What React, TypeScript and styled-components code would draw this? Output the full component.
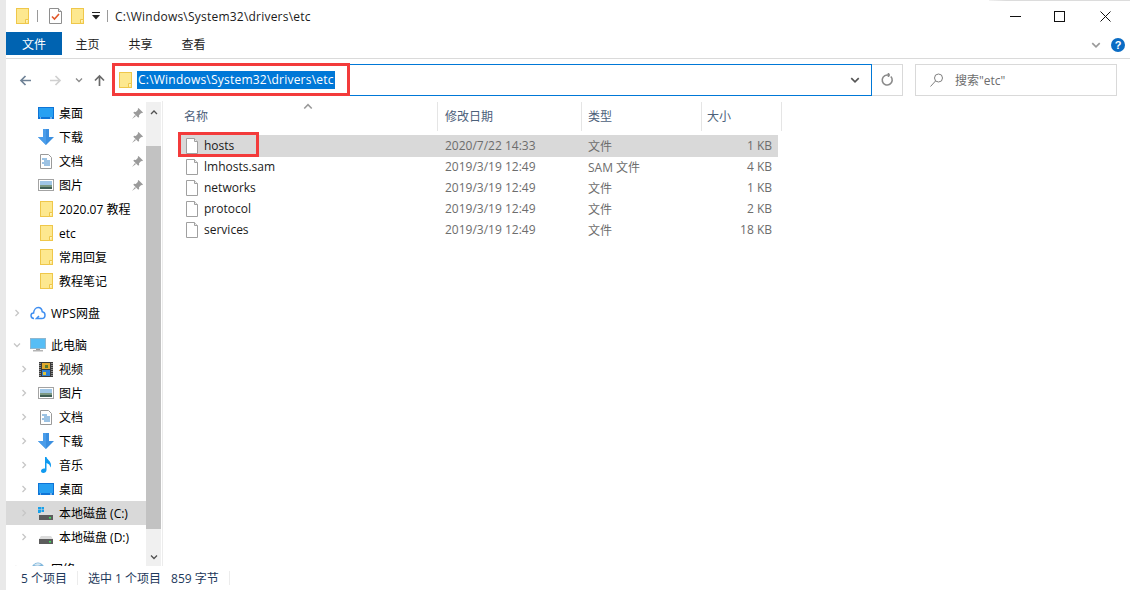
import React, { ReactElement, ReactNode } from "react";
import styled, { createGlobalStyle } from "styled-components";

const GlobalStyle = createGlobalStyle`
  html, body {
    margin: 0;
    padding: 0;
    background: #fff;
  }
  body {
    font-family: "Open Sans", "Noto Sans CJK SC", sans-serif;
    font-size: 12px;
    color: #000;
  }
  * {
    box-sizing: border-box;
  }
`;

const Window = styled.div`
  width: 1130px;
  height: 590px;
  display: flex;
  flex-direction: column;
  padding-left: 6px;
  background: #e9e9e9;
  overflow: hidden;
`;
const Inner = styled.div`
  flex: 1;
  display: flex;
  flex-direction: column;
  min-height: 0;
  background: #fff;
`;

/* title bar */
const TitleBar = styled.div`
  position: relative;
  height: 32px;
  flex: none;
  display: flex;
  align-items: center;
  padding-left: 10px;
  &::after {
    content: "";
    position: absolute;
    top: 0;
    right: 0;
    width: 141px;
    height: 1px;
    background: linear-gradient(90deg, #f2f2f2, #dcdcdc 12%);
  }
`;
const TitleSep = styled.span<{ $l: number; $r: number }>`
  width: 1px;
  height: 12px;
  margin: 0 ${p => p.$r}px 0 ${p => p.$l}px;
  background: #9a9a9a;
`;
const TitleText = styled.span`
  color: #1a1a1a;
  letter-spacing: 0.22px;
  white-space: nowrap;
`;
const QuickIcons = styled.div`
  display: flex;
  align-items: center;
  gap: 8px;
`;
const WindowButtons = styled.div`
  margin-left: auto;
  display: flex;
  align-items: center;
  padding-right: 2px;
`;
const WindowButton = styled.button`
  width: 46px;
  height: 32px;
  border: 0;
  padding: 0;
  background: none;
  display: flex;
  align-items: center;
  justify-content: center;
  &:first-child {
    width: 42px;
  }
`;

/* ribbon */
const Ribbon = styled.div`
  height: 27px;
  flex: none;
  display: flex;
  align-items: flex-start;
  border-bottom: 1px solid #dadada;
`;
const FileTab = styled.div`
  width: 56px;
  height: 23px;
  margin-right: -1px;
  background: #0063b1;
  color: #fff;
  display: flex;
  align-items: center;
  justify-content: center;
`;
const Tab = styled.div`
  width: 53px;
  height: 23px;
  color: #222;
  display: flex;
  align-items: center;
  justify-content: center;
`;
const RibbonRight = styled.div`
  margin-left: auto;
  height: 26px;
  display: flex;
  align-items: center;
  gap: 10px;
  padding-right: 5px;
`;
const HelpBadge = styled.span`
  width: 14px;
  height: 14px;
  border-radius: 50%;
  background: #0a6cc4;
  color: #fff;
  font: bold 11px/14px "Liberation Sans", sans-serif;
  text-align: center;
`;

/* address row */
const AddressRow = styled.div`
  height: 42px;
  flex: none;
  display: flex;
  align-items: flex-start;
  padding-top: 5px;
`;
const NavButtons = styled.div`
  width: 106px;
  height: 32px;
  flex: none;
  display: flex;
  align-items: center;
  padding-left: 13px;
`;
const NavButton = styled.span<{ $l: number }>`
  margin-left: ${p => p.$l}px;
  display: flex;
`;
const AddressBox = styled.div`
  position: relative;
  width: 760px;
  height: 32px;
  flex: none;
  display: flex;
  align-items: center;
  padding: 0 11px 0 6px;
  border: 1px solid #0078d7;
`;
const SelectedPath = styled.span`
  margin-left: 5px;
  height: 18px;
  line-height: 17px;
  padding: 0 1px;
  background: #0078d7;
  color: #fff;
  letter-spacing: 0.22px;
  white-space: nowrap;
`;
const AddressChevron = styled.span`
  margin-left: auto;
  display: flex;
`;
const RefreshBox = styled.div`
  width: 32px;
  height: 32px;
  flex: none;
  margin-left: -1px;
  border: 1px solid #d9d9d9;
  display: flex;
  align-items: center;
  justify-content: center;
`;
const SearchBox = styled.div`
  width: 202px;
  height: 32px;
  flex: none;
  margin-left: 12px;
  border: 1px solid #d9d9d9;
  display: flex;
  align-items: center;
  padding-left: 14px;
  gap: 11px;
  color: #6d6d6d;
`;
const RedMark = styled.div<{ $l: number; $t: number; $w: number; $h: number }>`
  position: absolute;
  left: ${p => p.$l}px;
  top: ${p => p.$t}px;
  width: ${p => p.$w}px;
  height: ${p => p.$h}px;
  border: 3px solid #f33b3b;
  pointer-events: none;
`;

/* body */
const Body = styled.div`
  flex: 1;
  min-height: 0;
  display: flex;
`;
const NavPane = styled.div`
  width: 140px;
  flex: none;
  overflow: hidden;
  display: flex;
  flex-direction: column;
`;
const NavGroup = styled.div`
  flex: none;
  display: flex;
  flex-direction: column;
  margin-bottom: 8px;
`;
const NavRow = styled.div<{ $depth: number; $selected?: boolean }>`
  height: 24px;
  flex: none;
  display: flex;
  align-items: center;
  padding-left: ${p => (p.$depth === 0 ? 4 : 11)}px;
  background: ${p => (p.$selected ? "#d9d9d9" : "transparent")};
  white-space: nowrap;
`;
const Expander = styled.span`
  width: 14px;
  height: 16px;
  flex: none;
  display: flex;
  align-items: center;
  justify-content: center;
`;
const NavIcon = styled.span<{ $depth: number }>`
  width: ${p => (p.$depth === 0 ? 17 : 18)}px;
  height: 16px;
  flex: none;
  margin: 0 ${p => (p.$depth === 0 ? 5 : 4)}px 0 ${p => (p.$depth === 0 ? 5 : 6)}px;
  display: flex;
  align-items: center;
  justify-content: center;
`;
const PinSlot = styled.span`
  margin-left: auto;
  margin-right: 3px;
  display: flex;
`;
const ScrollBar = styled.div`
  width: 15px;
  flex: none;
  display: flex;
  flex-direction: column;
  margin-top: 1px;
  background: #f0f0f0;
`;
const ScrollArrow = styled.div<{ $h: number }>`
  height: ${p => p.$h}px;
  flex: none;
  display: flex;
  justify-content: center;
  padding-top: 6px;
`;
const ScrollThumb = styled.div`
  height: 383px;
  flex: none;
  background: #c2c2c2;
`;
const ScrollTail = styled.div`
  flex: 1;
  display: flex;
  justify-content: center;
  align-items: flex-end;
  padding-bottom: 5px;
`;
const PaneLine = styled.div`
  width: 1px;
  flex: none;
  margin-left: 1px;
  background: #ececec;
`;

/* file list */
const ListPane = styled.div`
  position: relative;
  flex: 1;
  display: flex;
  flex-direction: column;
`;
const HeaderRow = styled.div`
  height: 29px;
  flex: none;
  margin-top: 1px;
  display: grid;
  grid-template-columns: 275px 144px 120px 80px;
  width: 619px;
  color: #4c607a;
`;
const HeaderCell = styled.div<{ $pad: number }>`
  border-right: 1px solid #e5e5e5;
  padding: 0 0 2px ${p => p.$pad}px;
  display: flex;
  align-items: center;
`;
const SortMark = styled.span`
  position: absolute;
  left: 140px;
  top: 0;
  display: flex;
`;
const FileList = styled.div`
  margin: 4px 0 0 16px;
  width: 599px;
  display: flex;
  flex-direction: column;
`;
const FileRow = styled.div<{ $selected?: boolean }>`
  height: 21px;
  flex: none;
  display: grid;
  grid-template-columns: 259px 144px 120px 76px;
  align-items: center;
  background: ${p => (p.$selected ? "#d9d9d9" : "transparent")};
  box-shadow: ${p => (p.$selected ? "0 1px 0 #d9d9d9" : "none")};
`;
const NameCell = styled.div`
  display: flex;
  align-items: center;
  padding-left: 7px;
  gap: 6px;
  color: #1a1a1a;
`;
const InfoCell = styled.div<{ $pad: number; $right?: boolean }>`
  color: #6d6d6d;
  padding: 0 ${p => (p.$right ? 6 : 0)}px 0 ${p => p.$pad}px;
  text-align: ${p => (p.$right ? "right" : "left")};
  white-space: nowrap;
`;

/* status bar */
const StatusBar = styled.div`
  height: 24px;
  flex: none;
  display: flex;
  align-items: center;
  padding-left: 15px;
  color: #1e395b;
  background: #fff;
`;
const StatusSep = styled.span`
  width: 1px;
  height: 14px;
  margin: 0 10px;
  background: #ececec;
`;
const StatusGap = styled.span`
  width: 10px;
`;

/* icons */
const FolderIcon = (): ReactElement => (
  <svg width="13" height="16" viewBox="0 0 13 16">
    <rect x="0.5" y="0.5" width="12" height="15" fill="#fde88f" stroke="#efc74a" />
    <path d="M9.500 15.500v-4h3" fill="#fff3bf" stroke="#efc74a" />
  </svg>
);
const ChecklistIcon = (): ReactElement => (
  <svg width="14" height="16" viewBox="0 0 14 16">
    <path d="M.5.5h9l3 3v12H.5z" fill="#fff" stroke="#8e8e8e" />
    <path d="M9.500.5v3h3" fill="#e4e4e4" stroke="#8e8e8e" />
    <path d="M3 8.500l2.500 2.500 4.500-5" fill="none" stroke="#e2582a" strokeWidth="1.600" />
  </svg>
);
const DropLine = (): ReactElement => (
  <svg width="8" height="8" viewBox="0 0 8 8">
    <rect x="0" y="0" width="8" height="1" fill="#222" />
    <path d="M0 3h8L4 7.500z" fill="#222" />
  </svg>
);
const DesktopIcon = (): ReactElement => (
  <svg width="16" height="12" viewBox="0 0 16 12">
    <rect width="16" height="12" fill="#0f74d6" />
    <rect x="1" y="1" width="14" height="9" fill="#27a0f2" />
    <rect x="12" y="10.500" width="2" height="1" fill="#cfe8fb" />
    <rect x="2" y="10.500" width="1" height="1" fill="#cfe8fb" />
  </svg>
);
const DownloadIcon = (): ReactElement => (
  <svg width="16" height="16" viewBox="0 0 16 16">
    <path d="M5 0h6v8h5l-8 8-8-8h5z" fill="#3b8fe0" />
    <path d="M5 0h3v16L0 8h5z" fill="#4a9dea" />
  </svg>
);
const DocIcon = (): ReactElement => (
  <svg width="12" height="15" viewBox="0 0 12 15">
    <path d="M.5.5h8l3 3v11H.5z" fill="#fff" stroke="#9a9a9a" />
    <path d="M2 5h5M4 7h6M2 9h8M4 11h6" stroke="#3a86c8" />
  </svg>
);
const PictureIcon = (): ReactElement => (
  <svg width="16" height="12" viewBox="0 0 16 12">
    <rect x="0.5" y="0.5" width="15" height="11" fill="#fff" stroke="#a3a3a3" />
    <rect x="2" y="2" width="12" height="4" fill="#9fc6e6" />
    <rect x="2" y="6" width="12" height="2" fill="#7d9a84" />
    <rect x="2" y="8" width="12" height="2" fill="#3f5f55" />
  </svg>
);
const CloudIcon = (): ReactElement => (
  <svg width="16" height="14" viewBox="0 0 16 14">
    <path
      d="M4 12.500C2 12.500 1 11 1 9.600 1 8 2.300 7 3.600 7c.2-3 2.200-5.500 4.600-5.500 2.400 0 3.800 2 4 4.200 1.600.2 2.800 1.600 2.800 3.200 0 2-1.400 3.600-3.400 3.600H6.500L9 10"
      fill="none"
      stroke="#3f8ef0"
      strokeWidth="1.500"
    />
  </svg>
);
const PcIcon = (): ReactElement => (
  <svg width="16" height="14" viewBox="0 0 16 14">
    <rect x="0.5" y="0.5" width="15" height="10" fill="#56bdf5" stroke="#8fb7cf" />
    <rect x="6" y="11" width="4" height="1" fill="#9a9a9a" />
    <rect x="3" y="12" width="10" height="1.500" fill="#b5b5b5" />
  </svg>
);
const FilmIcon = (): ReactElement => (
  <svg width="14" height="15" viewBox="0 0 14 15">
    <rect width="14" height="15" fill="#3a3a3a" />
    <rect x="3" y="1" width="8" height="6" fill="#e0a92e" />
    <rect x="3" y="8" width="8" height="6" fill="#2f7fd0" />
    <rect x="6" y="3" width="3" height="3" fill="#5a7b2e" />
    <rect x="4" y="10" width="3" height="3" fill="#e0c23a" />
    <path d="M1 1v13M13 1v13" stroke="#ddd" strokeDasharray="1 1" />
  </svg>
);
const MusicIcon = (): ReactElement => (
  <svg width="12" height="16" viewBox="0 0 12 16">
    <path
      d="M5 0h1.500c.3 2.500 4.500 4 4.500 8 0 1-.3 2-.8 2.600.3-2.400-1.700-4-3.700-4.600V13c0 1.700-1.500 3-3.300 3C2 16 1 15.200 1 14c0-1.500 1.500-2.600 3-2.600.4 0 .7 0 1 .1z"
      fill="#0f9af0"
    />
  </svg>
);
const DiskIcon = ({ system }: { system?: boolean }): ReactElement => (
  <svg width="16" height="16" viewBox="0 0 16 16">
    {system && (
      <path d="M0 2h3v2.500H0zM3.500 2H6v2.500H3.500zM0 5h3v3H0zM3.500 5H6v3H3.500z" fill="#18a0ea" />
    )}
    <path d="M3 7h10l2 3H1z" fill="#dcdcdc" />
    <rect x="1" y="10" width="14" height="5" fill="#5c5c5c" />
    <rect x="11" y="12" width="2" height="1.500" fill="#3fe05a" />
  </svg>
);
const GlobeIcon = (): ReactElement => (
  <svg width="14" height="16" viewBox="0 0 14 16">
    <circle cx="7" cy="8" r="6.500" fill="#7fb6dc" />
    <path d="M3 4c2-2 5-2 7-1-1 2-4 2-7 1z" fill="#d8e8f2" />
  </svg>
);
const PinIcon = (): ReactElement => (
  <svg width="11" height="11" viewBox="0 0 11 11">
    <path
      d="M6.500 0L11 4.500l-1 .8-.8-.3L7 7.200l.2 1.600-.9.900L1.300 4.700l.9-.9 1.600.2L6 1.800 5.700 1z"
      fill="#9b9b9b"
    />
    <path d="M3 7L0 11l4-3z" fill="#9b9b9b" />
  </svg>
);
const FileIcon = (): ReactElement => (
  <svg width="12" height="16" viewBox="0 0 12 16">
    <path d="M.5.5h8l3 3v12H.5z" fill="#fff" stroke="#a0a0a0" />
    <path d="M8.500.5v3h3" fill="#ededed" stroke="#a0a0a0" />
  </svg>
);
const Chevron = ({
  dir,
  color,
  size = 8
}: {
  dir: "up" | "down" | "right";
  color: string;
  size?: number;
}): ReactElement => {
  const d = {
    up: "M1 6l3-3 3 3",
    down: "M1 2.500l3 3 3-3",
    right: "M2.500 1l3 3-3 3"
  }[dir];
  return (
    <svg width={size} height={size} viewBox="0 0 8 8">
      <path d={d} fill="none" stroke={color} strokeWidth="1.300" />
    </svg>
  );
};
const ArrowIcon = ({
  dir,
  color
}: {
  dir: "left" | "right" | "up";
  color: string;
}): ReactElement => {
  const rotate = { left: 0, right: 180, up: 90 }[dir];
  return (
    <svg width="13" height="13" viewBox="0 0 13 13">
      <path
        d="M12 6.500H2M6.500 2L2 6.500 6.500 11"
        fill="none"
        stroke={color}
        strokeWidth="1.700"
        transform={`rotate(${rotate} 6.500 6.500)`}
      />
    </svg>
  );
};

type NavItem = {
  label: string;
  icon: ReactNode;
  pinned?: boolean;
  depth: number;
  hasExpander?: boolean;
  expanded?: boolean;
  selected?: boolean;
};

const quickAccess: NavItem[] = [
  { label: "桌面", icon: <DesktopIcon />, pinned: true, depth: 1 },
  { label: "下载", icon: <DownloadIcon />, pinned: true, depth: 1 },
  { label: "文档", icon: <DocIcon />, pinned: true, depth: 1 },
  { label: "图片", icon: <PictureIcon />, pinned: true, depth: 1 },
  { label: "2020.07 教程", icon: <FolderIcon />, depth: 1 },
  { label: "etc", icon: <FolderIcon />, depth: 1 },
  { label: "常用回复", icon: <FolderIcon />, depth: 1 },
  { label: "教程笔记", icon: <FolderIcon />, depth: 1 }
];
const thisPc: NavItem[] = [
  { label: "此电脑", icon: <PcIcon />, depth: 0, hasExpander: true, expanded: true },
  { label: "视频", icon: <FilmIcon />, depth: 1, hasExpander: true },
  { label: "图片", icon: <PictureIcon />, depth: 1, hasExpander: true },
  { label: "文档", icon: <DocIcon />, depth: 1, hasExpander: true },
  { label: "下载", icon: <DownloadIcon />, depth: 1, hasExpander: true },
  { label: "音乐", icon: <MusicIcon />, depth: 1, hasExpander: true },
  { label: "桌面", icon: <DesktopIcon />, depth: 1, hasExpander: true },
  { label: "本地磁盘 (C:)", icon: <DiskIcon system />, depth: 1, hasExpander: true, selected: true },
  { label: "本地磁盘 (D:)", icon: <DiskIcon />, depth: 1, hasExpander: true }
];

const files = [
  { name: "hosts", date: "2020/7/22 14:33", type: "文件", size: "1 KB", selected: true },
  { name: "lmhosts.sam", date: "2019/3/19 12:49", type: "SAM 文件", size: "4 KB" },
  { name: "networks", date: "2019/3/19 12:49", type: "文件", size: "1 KB" },
  { name: "protocol", date: "2019/3/19 12:49", type: "文件", size: "2 KB" },
  { name: "services", date: "2019/3/19 12:49", type: "文件", size: "18 KB" }
];

const NavEntry = ({ item }: { item: NavItem }): ReactElement => (
  <NavRow $depth={item.depth} $selected={item.selected}>
    <Expander>
      {item.hasExpander && (
        <Chevron dir={item.expanded ? "down" : "right"} color="#c6c6c6" />
      )}
    </Expander>
    <NavIcon $depth={item.depth}>{item.icon}</NavIcon>
    <span>{item.label}</span>
    {item.pinned && (
      <PinSlot>
        <PinIcon />
      </PinSlot>
    )}
  </NavRow>
);

const App = (): ReactElement => {
  return (
    <Window>
      <GlobalStyle />
      <Inner>
        <TitleBar>
          <FolderIcon />
          <TitleSep $l={8} $r={11} />
          <QuickIcons>
            <ChecklistIcon />
            <FolderIcon />
            <DropLine />
          </QuickIcons>
          <TitleSep $l={7} $r={7} />
          <TitleText>C:\Windows\System32\drivers\etc</TitleText>
          <WindowButtons>
            <WindowButton aria-label="最小化">
              <svg width="11" height="11" viewBox="0 0 11 11">
                <path d="M0 5.500h11" stroke="#111" />
              </svg>
            </WindowButton>
            <WindowButton aria-label="最大化">
              <svg width="11" height="11" viewBox="0 0 11 11">
                <rect x="0.500" y="0.500" width="10" height="10" fill="none" stroke="#111" />
              </svg>
            </WindowButton>
            <WindowButton aria-label="关闭">
              <svg width="11" height="11" viewBox="0 0 11 11">
                <path d="M.5.5l10 10M10.500.5l-10 10" stroke="#111" />
              </svg>
            </WindowButton>
          </WindowButtons>
        </TitleBar>
        <Ribbon>
          <FileTab>文件</FileTab>
          <Tab>主页</Tab>
          <Tab>共享</Tab>
          <Tab>查看</Tab>
          <RibbonRight>
            <Chevron dir="down" color="#9a9a9a" size={10} />
            <HelpBadge>?</HelpBadge>
          </RibbonRight>
        </Ribbon>
        <AddressRow>
          <NavButtons>
            <NavButton $l={0}>
              <ArrowIcon dir="left" color="#6f8296" />
            </NavButton>
            <NavButton $l={17}>
              <ArrowIcon dir="right" color="#d0d0d0" />
            </NavButton>
            <NavButton $l={13}>
              <Chevron dir="down" color="#8a8a8a" />
            </NavButton>
            <NavButton $l={10}>
              <ArrowIcon dir="up" color="#6a6a6a" />
            </NavButton>
          </NavButtons>
          <AddressBox>
            <FolderIcon />
            <SelectedPath>C:\Windows\System32\drivers\etc</SelectedPath>
            <AddressChevron>
              <Chevron dir="down" color="#555" size={10} />
            </AddressChevron>
            <RedMark $l={-1} $t={-2} $w={238} $h={33} />
          </AddressBox>
          <RefreshBox>
            <svg width="14" height="14" viewBox="0 0 14 14">
              <path
                d="M10.800 3.500A5 5 0 1 1 7 2H10M8.500 0v4"
                fill="none"
                stroke="#8a8a8a"
                strokeWidth="1.600"
              />
            </svg>
          </RefreshBox>
          <SearchBox>
            <svg width="14" height="14" viewBox="0 0 14 14">
              <circle cx="8.500" cy="5" r="4" fill="none" stroke="#808080" />
              <path d="M5.500 8L.5 13.500" stroke="#808080" />
            </svg>
            <span>搜索"etc"</span>
          </SearchBox>
        </AddressRow>
        <Body>
          <NavPane>
            <NavGroup>
              {quickAccess.map((item, index) => (
                <NavEntry key={index} item={item} />
              ))}
            </NavGroup>
            <NavGroup>
              <NavEntry
                item={{ label: "WPS网盘", icon: <CloudIcon />, depth: 0, hasExpander: true }}
              />
            </NavGroup>
            <NavGroup>
              {thisPc.map((item, index) => (
                <NavEntry key={index} item={item} />
              ))}
            </NavGroup>
            <NavGroup>
              <NavEntry
                item={{ label: "网络", icon: <GlobeIcon />, depth: 0, hasExpander: true }}
              />
            </NavGroup>
          </NavPane>
          <ScrollBar>
            <ScrollArrow $h={44}>
              <Chevron dir="up" color="#505050" />
            </ScrollArrow>
            <ScrollThumb />
            <ScrollTail>
              <Chevron dir="down" color="#505050" />
            </ScrollTail>
          </ScrollBar>
          <PaneLine />
          <ListPane>
            <SortMark>
              <Chevron dir="up" color="#9a9a9a" size={10} />
            </SortMark>
            <HeaderRow>
              <HeaderCell $pad={21}>名称</HeaderCell>
              <HeaderCell $pad={7}>修改日期</HeaderCell>
              <HeaderCell $pad={6}>类型</HeaderCell>
              <HeaderCell $pad={5}>大小</HeaderCell>
            </HeaderRow>
            <FileList>
              {files.map((file, index) => (
                <FileRow key={index} $selected={file.selected}>
                  <NameCell>
                    <FileIcon />
                    {file.name}
                  </NameCell>
                  <InfoCell $pad={7}>{file.date}</InfoCell>
                  <InfoCell $pad={6}>{file.type}</InfoCell>
                  <InfoCell $pad={0} $right>
                    {file.size}
                  </InfoCell>
                </FileRow>
              ))}
            </FileList>
            <RedMark $l={15} $t={31} $w={81} $h={25} />
          </ListPane>
        </Body>
        <StatusBar>
          <span>5 个项目</span>
          <StatusSep />
          <span>选中 1 个项目</span>
          <StatusGap />
          <span>859 字节</span>
          <StatusSep />
        </StatusBar>
      </Inner>
    </Window>
  );
};

export default App;
